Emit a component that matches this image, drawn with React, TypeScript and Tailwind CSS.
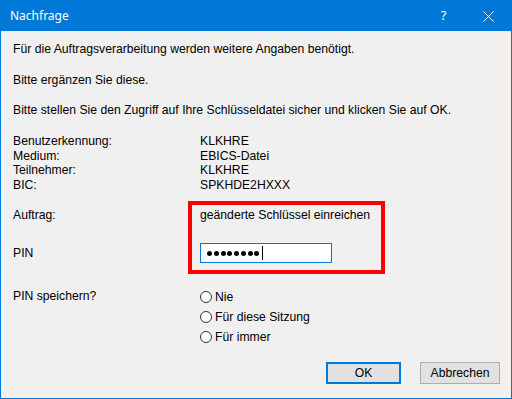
const font = { fontFamily: '"Liberation Sans", Arial, sans-serif' };

function Radio({ label }: { label: string }) {
  return (
    <label className="flex h-[20px] items-center gap-[3px]">
      <span className="h-[12px] w-[12px] rounded-full border border-[#333333] bg-white" />
      <span>{label}</span>
    </label>
  );
}

export default function App() {
  const info = [
    ["Benutzerkennung:", "KLKHRE"],
    ["Medium:", "EBICS-Datei"],
    ["Teilnehmer:", "KLKHRE"],
    ["BIC:", "SPKHDE2HXXX"],
  ];

  return (
    <div
      className="relative flex h-[399px] w-[512px] flex-col border border-[#0078d7] bg-[#f0f0f0] text-[12.2px] text-black"
      style={font}
    >
      {/* Title bar */}
      <div
        className="flex h-[30px] shrink-0 items-center bg-[#0078d7] pl-[9px] text-[12px] text-white"
        style={{ fontFamily: '"Noto Sans", "Open Sans", sans-serif' }}
      >
        <span className="flex-1">Nachfrage</span>
        <span className="w-[46px] pl-[3px] text-center text-[13px]">?</span>
        <span className="flex w-[46px] items-center justify-center">
          <svg width="11" height="11" viewBox="0 0 11 11">
            <path d="M0.5 0.5L10.5 10.5M10.5 0.5L0.5 10.5" stroke="white" strokeWidth="1" />
          </svg>
        </span>
      </div>

      {/* Body */}
      <div className="flex flex-1 flex-col pl-[12px] pt-[11px] leading-[15px]">
        <div>Für die Auftragsverarbeitung werden weitere Angaben benötigt.</div>
        <div className="mt-[16px]">Bitte ergänzen Sie diese.</div>
        <div className="mt-[15px]">
          Bitte stellen Sie den Zugriff auf Ihre Schlüsseldatei sicher und klicken Sie auf OK.
        </div>

        <div className="mt-[16px] grid grid-cols-[187px_1fr] leading-[14.5px]">
          {info.map(([k, v]) => (
            <div key={k} className="contents">
              <div>{k}</div>
              <div>{v}</div>
            </div>
          ))}
        </div>

        <div className="mt-[16px] grid grid-cols-[187px_1fr]">
          <div>Auftrag:</div>
          <div>geänderte Schlüssel einreichen</div>
        </div>

        <div className="mt-[20px] grid grid-cols-[187px_1fr] items-center">
          <div className="pt-[1px]">PIN</div>
          <div className="flex h-[20px] w-[132px] items-center gap-[1.75px] border border-[#0078d7] bg-white pl-[6px]">
            {Array.from({ length: 8 }).map((_, i) => (
              <span key={i} className="h-[5px] w-[5px] rounded-full bg-black" />
            ))}
            <span className="ml-[0.5px] h-[14px] w-[1px] bg-black" />
          </div>
        </div>

        <div className="mt-[24px] grid grid-cols-[187px_1fr]">
          <div className="pt-[2px]">PIN speichern?</div>
          <div className="flex flex-col">
            <Radio label="Nie" />
            <Radio label="Für diese Sitzung" />
            <Radio label="Für immer" />
          </div>
        </div>

        <div className="mt-auto mb-[14px] flex justify-end gap-[19px] pr-[11px]">
          <button className="h-[22px] w-[75px] border-2 border-[#0078d7] bg-[#e1e1e1]" style={font}>
            OK
          </button>
          <button className="h-[22px] w-[80px] border border-[#adadad] bg-[#e1e1e1]" style={font}>
            Abbrechen
          </button>
        </div>
      </div>

      {/* Red highlight annotation */}
      <div className="pointer-events-none absolute left-[187px] top-[200px] h-[73px] w-[197px] border-4 border-[#ff0000]" />
    </div>
  );
}
